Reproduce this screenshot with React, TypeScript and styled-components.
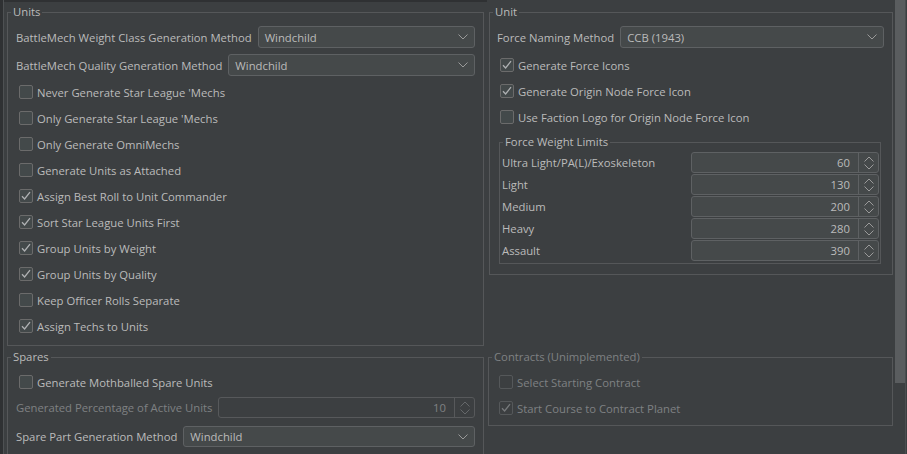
import styled, { createGlobalStyle } from 'styled-components';

const colors = {
  bg: '#3c3f41',
  text: '#bbbbbb',
  disabled: '#7f8183',
  groupBorder: '#555759',
  fieldBg: '#45494a',
  fieldBorder: '#5e6163',
  boxBorder: '#6b6b6b',
  thumb: '#5a5d5f',
};

const GlobalStyle = createGlobalStyle`
  html, body {
    margin: 0;
    padding: 0;
    background: ${colors.bg};
  }
  body {
    font-family: "Open Sans", "Noto Sans", sans-serif;
    font-size: 11.3px;
    color: ${colors.text};
  }
`;

const Page = styled.div`
  display: flex;
  width: 907px;
  height: 454px;
  overflow: hidden;
  background: ${colors.bg};
`;

const LeftEdge = styled.div`
  width: 3px;
  background: #2f3133;
  border-right: 1px solid #4e5153;
`;

const Main = styled.div`
  display: grid;
  grid-template-columns: 477px 404px;
  grid-template-rows: auto auto;
  column-gap: 5px;
  row-gap: 3px;
  align-items: start;
  padding: 4px 0 0 3px;
  background: linear-gradient(#2f3133, #2f3133) no-repeat 0 0 / 483px 2px;
`;

const ScrollTrack = styled.div`
  display: flex;
  width: 10px;
  margin-left: auto;
  margin-right: 1px;
  border-right: 1px solid #4b4e50;
`;

const Thumb = styled.div`
  width: 10px;
  height: 383px;
  background: ${colors.thumb};
`;

const Group = styled.fieldset<{ $inset?: string }>`
  margin: ${p => p.$inset || '0'};
  padding: 0;
  min-width: 0;
  border: 1px solid ${colors.groupBorder};
`;

const Legend = styled.legend<{ $disabled?: boolean }>`
  margin-left: 3px;
  padding: 0 2px;
  line-height: 16px;
  color: ${p => (p.$disabled ? colors.disabled : colors.text)};
`;

const Body = styled.div<{ $pad: string }>`
  display: flex;
  flex-direction: column;
  padding: ${p => p.$pad};
`;

const FieldRow = styled.div<{ $h?: number; $mb?: number; $mt?: number }>`
  display: flex;
  align-items: center;
  gap: 6px;
  height: ${p => p.$h || 22}px;
  margin-top: ${p => p.$mt || 0}px;
  margin-bottom: ${p => p.$mb || 0}px;
`;

const Label = styled.span<{ $disabled?: boolean }>`
  white-space: nowrap;
  color: ${p => (p.$disabled ? colors.disabled : colors.text)};
`;

const Combo = styled.div`
  flex: 1;
  display: flex;
  align-items: center;
  height: 100%;
  box-sizing: border-box;
  background: ${colors.fieldBg};
  border: 1px solid ${colors.fieldBorder};
  border-radius: 3px;
  padding-left: 6px;
`;

const ComboText = styled.span`
  flex: 1;
`;

const ComboArrow = styled.div`
  width: 22px;
  display: flex;
  align-items: center;
  justify-content: center;
`;

const CheckRow = styled.label<{ $disabled?: boolean }>`
  display: flex;
  align-items: center;
  gap: 4px;
  height: 26px;
  padding-left: 3px;
  color: ${p => (p.$disabled ? colors.disabled : colors.text)};
`;

const Box = styled.span<{ $disabled?: boolean }>`
  width: 14px;
  height: 14px;
  box-sizing: border-box;
  border: 1px solid ${p => (p.$disabled ? '#55585a' : colors.boxBorder)};
  border-radius: 2px;
  background: ${p => (p.$disabled ? colors.bg : '#43494a')};
  display: flex;
  align-items: center;
  justify-content: center;
`;

const SpinRow = styled.div`
  display: flex;
  align-items: center;
  height: 21px;
  margin-bottom: 1px;
`;

const SpinLabel = styled.span`
  flex: 1;
  white-space: nowrap;
`;

const Spinner = styled.div<{ $width?: number; $disabled?: boolean }>`
  display: flex;
  height: 21px;
  width: ${p => (p.$width ? `${p.$width}px` : 'auto')};
  flex: ${p => (p.$width ? 'none' : 1)};
  box-sizing: border-box;
  background: ${p => (p.$disabled ? colors.bg : colors.fieldBg)};
  border: 1px solid ${p => (p.$disabled ? '#57595b' : colors.fieldBorder)};
  border-radius: 3px;
  color: ${p => (p.$disabled ? colors.disabled : colors.text)};
`;

const SpinValue = styled.span`
  flex: 1;
  display: flex;
  align-items: center;
  justify-content: flex-end;
  padding-right: 8px;
`;

const SpinButton = styled.div<{ $disabled?: boolean }>`
  width: 19px;
  border-left: 1px solid ${p => (p.$disabled ? '#57595b' : colors.fieldBorder)};
  display: flex;
  align-items: center;
  justify-content: center;
`;

const Chevron = () => (
  <svg width="10" height="6" viewBox="0 0 10 6">
    <path d="M0.5 0.5 L5 5 L9.5 0.5" fill="none" stroke="#9a9a9a" strokeWidth="1" />
  </svg>
);

const UpDown = ({ disabled }: { disabled?: boolean }) => (
  <svg width="10" height="14" viewBox="0 0 10 14">
    <path
      d="M0.5 5.5 L5 1 L9.5 5.5 M0.5 8.5 L5 13 L9.5 8.5"
      fill="none"
      stroke={disabled ? '#65686a' : '#9a9a9a'}
      strokeWidth="1"
    />
  </svg>
);

const Check = ({ checked, disabled }: { checked?: boolean; disabled?: boolean }) => (
  <Box $disabled={disabled}>
    {checked && (
      <svg width="12" height="12" viewBox="0 0 12 12">
        <path
          d="M2 6.2 L4.6 9 L10 2.2"
          fill="none"
          stroke={disabled ? '#777a7c' : '#afb1b3'}
          strokeWidth="1.3"
        />
      </svg>
    )}
  </Box>
);

const CheckItem = ({ text, checked, disabled }: { text: string; checked?: boolean; disabled?: boolean }) => (
  <CheckRow $disabled={disabled}>
    <Check checked={checked} disabled={disabled} />
    {text}
  </CheckRow>
);

const ComboField = ({ value }: { value: string }) => (
  <Combo>
    <ComboText>{value}</ComboText>
    <ComboArrow>
      <Chevron />
    </ComboArrow>
  </Combo>
);

const unitChecks = [
  { text: "Never Generate Star League 'Mechs", checked: false },
  { text: "Only Generate Star League 'Mechs", checked: false },
  { text: 'Only Generate OmniMechs', checked: false },
  { text: 'Generate Units as Attached', checked: false },
  { text: 'Assign Best Roll to Unit Commander', checked: true },
  { text: 'Sort Star League Units First', checked: true },
  { text: 'Group Units by Weight', checked: true },
  { text: 'Group Units by Quality', checked: true },
  { text: 'Keep Officer Rolls Separate', checked: false },
  { text: 'Assign Techs to Units', checked: true },
];

const weightLimits = [
  { label: 'Ultra Light/PA(L)/Exoskeleton', value: 60 },
  { label: 'Light', value: 130 },
  { label: 'Medium', value: 200 },
  { label: 'Heavy', value: 280 },
  { label: 'Assault', value: 390 },
];

export default function App() {
  return (
    <Page>
      <GlobalStyle />
      <LeftEdge />
      <Main>
        {/* Units */}
        <Group>
          <Legend>Units</Legend>
          <Body $pad="6px 8px 6px 8px">
            <FieldRow $mb={6}>
              <Label>BattleMech Weight Class Generation Method</Label>
              <ComboField value="Windchild" />
            </FieldRow>
            <FieldRow $mb={3}>
              <Label>BattleMech Quality Generation Method</Label>
              <ComboField value="Windchild" />
            </FieldRow>
            {unitChecks.map(c => (
              <CheckItem key={c.text} text={c.text} checked={c.checked} />
            ))}
          </Body>
        </Group>

        {/* Unit */}
        <Group>
          <Legend>Unit</Legend>
          <Body $pad="6px 8px 10px 7px">
            <FieldRow $mb={4}>
              <Label>Force Naming Method</Label>
              <ComboField value="CCB (1943)" />
            </FieldRow>
            <CheckItem text="Generate Force Icons" checked />
            <CheckItem text="Generate Origin Node Force Icon" checked />
            <CheckItem text="Use Faction Logo for Origin Node Force Icon" />
            <Group $inset="4px 3px 0 2px">
              <Legend>Force Weight Limits</Legend>
              <Body $pad="2px 1px 1px 2px">
                {weightLimits.map(w => (
                  <SpinRow key={w.label}>
                    <SpinLabel>{w.label}</SpinLabel>
                    <Spinner $width={188}>
                      <SpinValue>{w.value}</SpinValue>
                      <SpinButton>
                        <UpDown />
                      </SpinButton>
                    </Spinner>
                  </SpinRow>
                ))}
              </Body>
            </Group>
          </Body>
        </Group>

        {/* Spares */}
        <Group>
          <Legend>Spares</Legend>
          <Body $pad="4px 8px 12px 8px">
            <CheckItem text="Generate Mothballed Spare Units" />
            <FieldRow $h={21} $mt={2}>
              <Label $disabled>Generated Percentage of Active Units</Label>
              <Spinner $disabled>
                <SpinValue>10</SpinValue>
                <SpinButton $disabled>
                  <UpDown disabled />
                </SpinButton>
              </Spinner>
            </FieldRow>
            <FieldRow $h={21} $mt={8}>
              <Label>Spare Part Generation Method</Label>
              <ComboField value="Windchild" />
            </FieldRow>
          </Body>
        </Group>

        {/* Contracts */}
        <Group $inset="0 0 0 -1px">
          <Legend $disabled>Contracts (Unimplemented)</Legend>
          <Body $pad="4px 8px 4px 7px">
            <CheckItem text="Select Starting Contract" disabled />
            <CheckItem text="Start Course to Contract Planet" checked disabled />
          </Body>
        </Group>
      </Main>
      <ScrollTrack>
        <Thumb />
      </ScrollTrack>
    </Page>
  );
}
